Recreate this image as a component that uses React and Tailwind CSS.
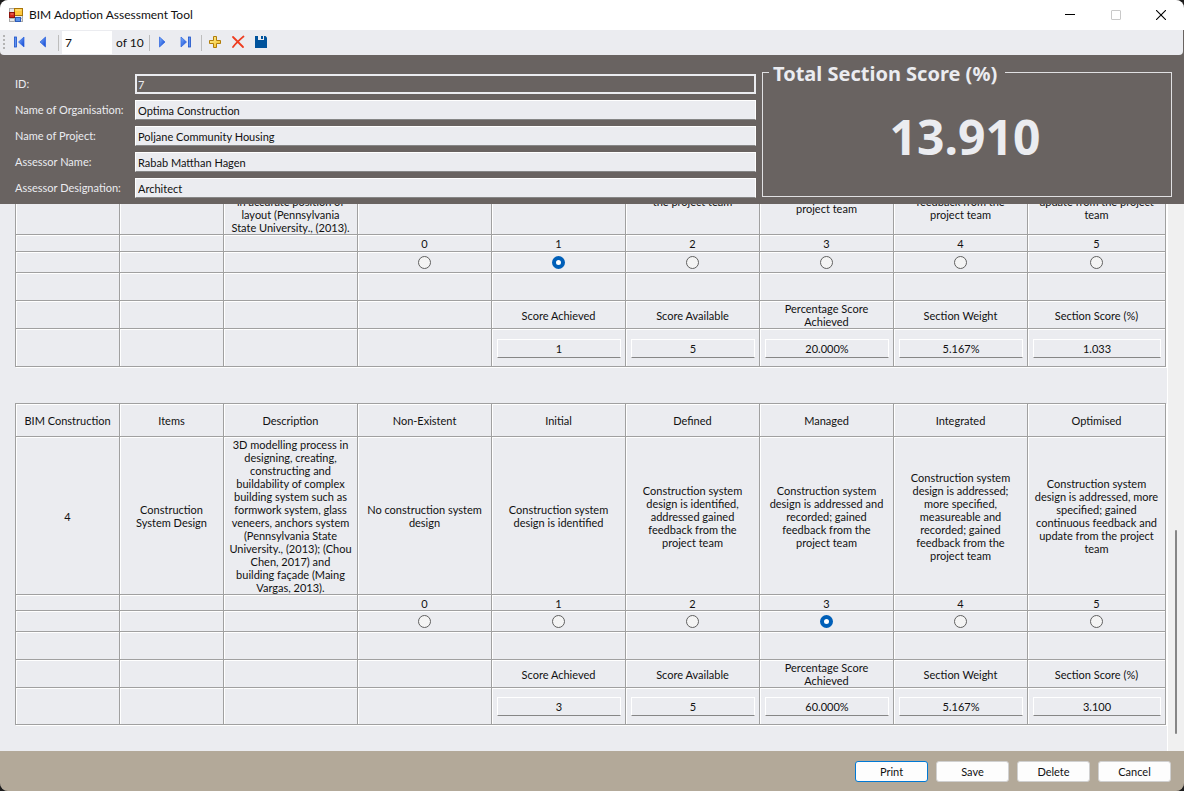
import React from "react";

const LEVELS = ["Non-Existent", "Initial", "Defined", "Managed", "Integrated", "Optimised"];

const SCROLLED_SECTION = {
  id: 3,
  header: false,
  number: "",
  item: "",
  description:
    "\n\n\n\n\nin accurate position of\nlayout (Pennsylvania\nState University., (2013).",
  levels: [
    "",
    "",
    "\n\n\nthe project team",
    "\n\n\n\nproject team",
    "\n\n\n\nfeedback from the\nproject team",
    "\n\n\n\nupdate from the project\nteam",
  ],
  selected: 1,
  scores: ["1", "5", "20.000%", "5.167%", "1.033"],
  numberRow: "h-[17px]",
  scoreRow: "h-[38px]",
};

const CURRENT_SECTION = {
  id: 4,
  header: true,
  number: "4",
  item: "Construction\nSystem Design",
  description:
    "3D modelling process in\ndesigning, creating,\nconstructing and\nbuildability of complex\nbuilding system such as\nformwork system, glass\nveneers, anchors system\n(Pennsylvania State\nUniversity., (2013); (Chou\nChen, 2017) and\nbuilding façade (Maing\nVargas, 2013).",
  levels: [
    "No construction system\ndesign",
    "Construction system\ndesign is identified",
    "Construction system\ndesign is identified,\naddressed gained\nfeedback from the\nproject team",
    "Construction system\ndesign is addressed and\nrecorded; gained\nfeedback from the\nproject team",
    "Construction system\ndesign is addressed;\nmore specified,\nmeasureable and\nrecorded; gained\nfeedback from the\nproject team",
    "Construction system\ndesign is addressed, more\nspecified; gained\ncontinuous feedback and\nupdate from the project\nteam",
  ],
  selected: 3,
  scores: ["3", "5", "60.000%", "5.167%", "3.100"],
  numberRow: "h-4",
  scoreRow: "h-[37px]",
};

const SECTIONS = [SCROLLED_SECTION, CURRENT_SECTION];

const SCORE_LABELS = [
  "Score Achieved",
  "Score Available",
  "Percentage Score\nAchieved",
  "Section Weight",
  "Section Score (%)",
];

const FIELDS = [
  ["organisation", "Name of Organisation:", "Optima Construction"],
  ["project", "Name of Project:", "Poljane Community Housing"],
  ["assessor", "Assessor Name:", "Rabab Matthan Hagen"],
  ["designation", "Assessor Designation:", "Architect"],
];

const CELL =
  "border-l border-t border-[#a0a0a0] p-0 pt-px text-center align-middle font-normal whitespace-pre shadow-[inset_1px_1px_#ffffff]";

function Blank({ count }) {
  return Array.from({ length: count }, (_, i) => <td key={i} className={CELL}></td>);
}

function SectionTable({ section }) {
  return (
    <table className="w-full table-fixed border-separate border-spacing-0 border-r border-b border-[#a0a0a0] leading-[13px] shadow-[1px_1px_#ffffff]">
      <colgroup>
        <col className="w-[104px]" />
        <col className="w-[104px]" />
        <col className="w-[134px]" />
        {LEVELS.map((l, i) => (
          <col key={l} className={i === 5 ? "w-[138px]" : "w-[134px]"} />
        ))}
      </colgroup>
      {section.header && (
        <thead>
          <tr className="h-[33px]">
            {["BIM Construction", "Items", "Description", ...LEVELS].map((h) => (
              <th key={h} scope="col" className={CELL}>{h}</th>
            ))}
          </tr>
        </thead>
      )}
      <tbody>
        <tr>
          <td className={CELL}>{section.number}</td>
          <td className={CELL}>{section.item}</td>
          <td className={CELL}>{section.description}</td>
          {section.levels.map((text, i) => (
            <td key={i} className={CELL}>{text}</td>
          ))}
        </tr>
        <tr className={section.numberRow}>
          <Blank count={3} />
          {LEVELS.map((l, i) => (
            <td key={l} className={CELL}>{i}</td>
          ))}
        </tr>
        <tr className="h-[21px]">
          <Blank count={3} />
          {LEVELS.map((l, i) => (
            <td key={l} className={CELL}>
              <input
                type="radio"
                name={`section-${section.id}`}
                aria-label={l}
                defaultChecked={i === section.selected}
                className="mx-auto block size-[13px] appearance-none rounded-full border border-[#606060] bg-[#f4f4f4] checked:border-4 checked:border-[#005fb8] checked:bg-white"
              />
            </td>
          ))}
        </tr>
        <tr className="h-7">
          <Blank count={9} />
        </tr>
        <tr className="h-7">
          <Blank count={4} />
          {SCORE_LABELS.map((label) => (
            <td key={label} className={CELL}>{label}</td>
          ))}
        </tr>
        <tr className={section.scoreRow}>
          <Blank count={4} />
          {section.scores.map((score, i) => (
            <td key={i} className={CELL}>
              <div className="pr-1 pl-[5px]">
                <input
                  readOnly
                  aria-label={SCORE_LABELS[i]}
                  defaultValue={score}
                  className="block h-[19px] w-full border border-white border-b-[#868686] bg-[#ebecf0] text-center leading-[13px]"
                />
              </div>
            </td>
          ))}
        </tr>
      </tbody>
    </table>
  );
}

function ToolButton({ label, children }) {
  return (
    <button type="button" aria-label={label} className="flex h-6 w-[23px] items-center justify-center">
      <svg width="15" height="15" viewBox="0 0 15 15">{children}</svg>
    </button>
  );
}

function Separator() {
  return <span className="mr-px ml-1 h-4 w-px bg-[#bdbdbd]"></span>;
}

export default function App() {
  return (
    <div className="h-screen bg-[#1c1c1c] font-[Lato,Roboto,sans-serif] text-[11px] text-[#111111]">
      <div className="flex h-full flex-col overflow-hidden rounded-lg bg-[#696361]">
        <svg width="0" height="0" className="absolute" aria-hidden="true">
          <defs>
            <linearGradient id="blue" x1="0" y1="0" x2="1" y2="1">
              <stop offset="0" stopColor="#7fb4ff" />
              <stop offset="1" stopColor="#0b3fd0" />
            </linearGradient>
            <linearGradient id="gold" x1="0" y1="0" x2="1" y2="1">
              <stop offset="0" stopColor="#fff3a0" />
              <stop offset="1" stopColor="#f2bc1c" />
            </linearGradient>
          </defs>
        </svg>

        <header className="flex h-[30px] shrink-0 items-center justify-between bg-white pl-[9px] text-xs">
          <div className="flex items-center gap-[6px]">
            <svg width="14" height="14" viewBox="0 0 14 14" aria-hidden="true">
              <rect x="0.5" y="0.5" width="13" height="13" fill="#e9e9ea" stroke="#a8a8a8" />
              <path d="M5.5 0v14M0 10.5h14M10 9v5" stroke="#b5b5b5" />
              <rect x="5.5" y="0.5" width="8" height="7" fill="#ffc83d" stroke="#a87508" />
              <path d="M6.5 2h6" stroke="#ffe694" />
              <rect x="0.5" y="4.500" width="5" height="5" fill="#d3261b" stroke="#8d120c" />
              <path d="M1.500 6h3" stroke="#f28b74" />
              <rect x="6.500" y="9.500" width="5" height="4" fill="#5b93ea" stroke="#2c5bb8" />
            </svg>
            <h1>BIM Adoption Assessment Tool</h1>
          </div>
          <div className="flex h-full">
            <button type="button" aria-label="Minimize" className="flex w-[46px] items-center justify-center">
              <svg width="10" height="10" viewBox="0 0 10 10"><path d="M0 4.5h10" stroke="#000000" /></svg>
            </button>
            <button type="button" aria-label="Maximize" className="flex w-[45px] items-center justify-center">
              <svg width="10" height="10" viewBox="0 0 10 10"><rect x="0.5" y="0.5" width="9" height="9" rx="0.5" fill="none" stroke="#c9c9c9" /></svg>
            </button>
            <button type="button" aria-label="Close" className="flex w-[46px] items-center justify-center">
              <svg width="10" height="10" viewBox="0 0 10 10"><path d="M0 0l10 10M10 0L0 10" stroke="#000000" strokeWidth="1.1" /></svg>
            </button>
          </div>
        </header>

        <nav className="mr-px flex h-[25px] shrink-0 items-center rounded-b bg-[#ebecf0] pl-[3px] text-xs">
          <svg width="5" height="15" viewBox="0 0 5 15" aria-hidden="true">
            <path d="M0 1h2M0 5h2M0 9h2M0 13h2" stroke="#b4b4b4" strokeWidth="2" />
          </svg>
          <ToolButton label="Move first">
            <rect x="2.500" y="2" width="2" height="10" fill="#5c92f2" stroke="#1d52c8" strokeWidth="0.8" />
            <path d="M12 2v10L6.500 7z" fill="url(#blue)" stroke="#2a62dc" strokeWidth="0.7" />
          </ToolButton>
          <ToolButton label="Move previous">
            <path d="M10.500 2v10L5 7z" fill="url(#blue)" stroke="#2a62dc" strokeWidth="0.7" />
          </ToolButton>
          <Separator />
          <input aria-label="Position" defaultValue="7" className="ml-[2px] h-[23px] w-[50px] bg-white px-[3px]" />
          <span className="w-[33px] pl-1 whitespace-nowrap">of 10</span>
          <Separator />
          <ToolButton label="Move next">
            <path d="M4.500 2v10L10 7z" fill="url(#blue)" stroke="#2a62dc" strokeWidth="0.7" />
          </ToolButton>
          <ToolButton label="Move last">
            <path d="M3 2v10L8.500 7z" fill="url(#blue)" stroke="#2a62dc" strokeWidth="0.7" />
            <rect x="10.500" y="2" width="2" height="10" fill="#5c92f2" stroke="#1d52c8" strokeWidth="0.8" />
          </ToolButton>
          <Separator />
          <ToolButton label="Add new">
            <path d="M6.500 1.500h3v4h4v3h-4v4h-3v-4h-4v-3h4z" fill="url(#gold)" stroke="#b17d0a" />
          </ToolButton>
          <ToolButton label="Delete record">
            <path d="M3 2l10 10M13.500 1.500C9.500 5 6 8 3 12" fill="none" stroke="#ee3d20" strokeWidth="1.800" strokeLinecap="round" />
          </ToolButton>
          <ToolButton label="Save record">
            <path d="M2 1h10.500l1.500 1.500v10.500H2z" fill="#00539c" />
            <rect x="5" y="1" width="6" height="4" fill="#ebecf0" />
            <rect x="8" y="1" width="2" height="3" fill="#00539c" />
          </ToolButton>
        </nav>

        <section className="grid shrink-0 grid-cols-[741fr_410fr] gap-[6px] pr-3 pb-[6px] pl-[15px] text-[#ebecf0]">
          <div className="grid grid-cols-[120px_1fr] content-end gap-y-[6px]">
            <label htmlFor="record-id" className="leading-5">ID:</label>
            <input
              id="record-id"
              readOnly
              defaultValue="7"
              className="h-5 min-w-0 border-2 border-[#ebecf0] bg-[#696361] px-px"
            />
            {FIELDS.map(([id, label, value]) => (
              <React.Fragment key={id}>
                <label htmlFor={id} className="leading-5">{label}</label>
                <input
                  id={id}
                  defaultValue={value}
                  className="h-5 min-w-0 border border-white border-b-[#868686] bg-[#ebecf0] px-[2px] text-[#111111]"
                />
              </React.Fragment>
            ))}
          </div>
          <fieldset className="mt-[3px] mb-px h-[139px] border border-[#e0e0e2] pl-[6px] font-['Noto_Sans','Open_Sans',sans-serif] font-bold">
            <legend className="pt-1 pr-2 pl-1 text-xl leading-6">Total Section Score (%)</legend>
            <output className="block pt-[27px] pr-[10px] text-center text-5xl leading-none">13.910</output>
          </fieldset>
        </section>

        <div className="flex min-h-0 flex-1 bg-[#ebecf0]">
          <main className="flex min-w-0 flex-1 flex-col justify-end gap-9 overflow-hidden border-r border-white pr-[2px] pb-[26px] pl-[15px]">
            {SECTIONS.map((section) => (
              <SectionTable key={section.id} section={section} />
            ))}
          </main>
          <div className="flex w-4 flex-col items-center justify-end bg-[#f0f0f0] pb-[17px]">
            <div className="h-51 w-[2px] rounded-full bg-[#868686]"></div>
          </div>
        </div>

        <footer className="flex h-10 shrink-0 items-center justify-end gap-2 bg-[#b3a999] pr-[13px]">
          {["Print", "Save", "Delete", "Cancel"].map((label) => (
            <button
              key={label}
              type="button"
              className="h-[21px] w-[73px] rounded-[3px] border border-[#d0d0d0] bg-[#fdfdfd] leading-[13px] first:border-[#0078d4]"
            >
              {label}
            </button>
          ))}
        </footer>
      </div>
    </div>
  );
}
